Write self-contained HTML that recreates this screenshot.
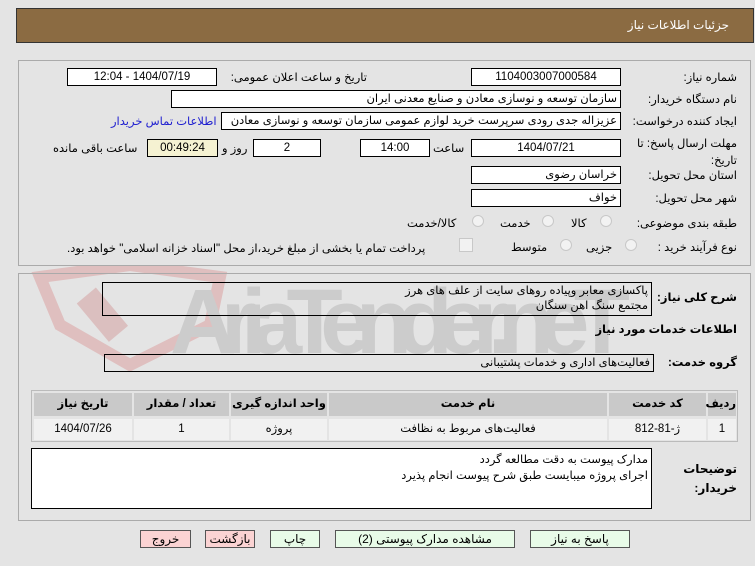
<!DOCTYPE html>
<html><head><meta charset="utf-8"><style>
body{margin:0;width:755px;height:566px;background:#e4e4e4;font-family:"Liberation Sans","DejaVu Sans",sans-serif;font-size:11.5px;color:#000;position:relative;overflow:hidden}
.a{position:absolute}
.box{position:absolute;background:#fff;border:1px solid #000;box-sizing:border-box;direction:rtl;padding:0 3px;line-height:16px;white-space:nowrap;overflow:hidden}
.c{text-align:center}
.l{position:absolute;direction:rtl;white-space:nowrap}
.panel{position:absolute;border:1px solid #aaa;box-sizing:border-box}
.rad{position:absolute;width:12px;height:12px;border-radius:50%;border:1px solid #c8c8c8;background:#f2f2f2;box-sizing:border-box}
.th,.td{position:absolute;box-sizing:border-box;text-align:center;line-height:22px;direction:rtl}
.th{background:#c9c9c9;font-weight:bold;top:393px;height:23px}
.td{background:#f1f1f1;top:419px;height:21px;line-height:20px}
.btn{position:absolute;top:530px;height:18px;border:1px solid #555;box-sizing:border-box;text-align:center;line-height:16px;font-size:12px}
</style></head><body>
<div class="a" style="left:16px;top:8px;width:738px;height:35px;background:#8b6b42;border:1px solid #333;box-sizing:border-box"></div>
<div class="l" style="right:26px;top:18px;color:#fff;font-size:12px">جزئیات اطلاعات نیاز</div>

<svg class="a" style="left:20px;top:265px;opacity:0.4" width="640" height="110">
<path d="M20 12 L110 0 L200 12 L190 60 L110 100 L40 60 Z" fill="none" stroke="#d88a8a" stroke-width="12"/>
<rect x="70" y="25" width="25" height="50" fill="#d08a8a" transform="rotate(-40 82 50)"/>
<text x="150" y="88" font-family="Liberation Sans" font-size="92" font-weight="bold" fill="#aaa" textLength="460">AriaTender.neT</text>
</svg>

<div class="panel" style="left:18px;top:60px;width:733px;height:206px"></div>
<div class="panel" style="left:18px;top:273px;width:733px;height:248px"></div>

<div class="l" style="right:18px;top:70px">شماره نیاز:</div>
<div class="box c" style="left:471px;top:68px;width:150px;height:18px">1104003007000584</div>
<div class="l" style="right:388px;top:70px">تاریخ و ساعت اعلان عمومی:</div>
<div class="box c" style="left:67px;top:68px;width:150px;height:18px">1404/07/19 - 12:04</div>

<div class="l" style="right:18px;top:92px">نام دستگاه خریدار:</div>
<div class="box" style="left:171px;top:90px;width:450px;height:18px">سازمان توسعه و نوسازی معادن و صنایع معدنی ایران</div>

<div class="l" style="right:18px;top:114px">ایجاد کننده درخواست:</div>
<div class="box" style="left:221px;top:112px;width:400px;height:18px">عزیزاله جدی رودی سرپرست خرید لوازم عمومی  سازمان توسعه و نوسازی معادن</div>
<div class="l" style="left:111px;top:114px;color:#2020d0">اطلاعات تماس خریدار</div>

<div class="l" style="right:18px;top:136px;line-height:17px;width:110px;white-space:normal">مهلت ارسال پاسخ: تا تاریخ:</div>
<div class="box c" style="left:471px;top:139px;width:150px;height:18px">1404/07/21</div>
<div class="l" style="left:433px;top:141px">ساعت</div>
<div class="box c" style="left:360px;top:139px;width:70px;height:18px">14:00</div>
<div class="box c" style="left:253px;top:139px;width:68px;height:18px">2</div>
<div class="l" style="left:222px;top:141px">روز و</div>
<div class="box c" style="left:147px;top:139px;width:71px;height:18px;background:#f5f2d2">00:49:24</div>
<div class="l" style="left:53px;top:141px">ساعت باقی مانده</div>

<div class="l" style="right:18px;top:168px">استان محل تحویل:</div>
<div class="box" style="left:471px;top:166px;width:150px;height:18px">خراسان رضوی</div>
<div class="l" style="right:18px;top:191px">شهر محل تحویل:</div>
<div class="box" style="left:471px;top:189px;width:150px;height:18px">خواف</div>

<div class="l" style="right:18px;top:216px">طبقه بندی موضوعی:</div>
<div class="rad" style="left:600px;top:215px"></div><div class="l" style="left:571px;top:216px">کالا</div>
<div class="rad" style="left:542px;top:215px"></div><div class="l" style="left:500px;top:216px">خدمت</div>
<div class="rad" style="left:472px;top:215px"></div><div class="l" style="left:407px;top:216px">کالا/خدمت</div>

<div class="l" style="right:18px;top:240px">نوع فرآیند خرید :</div>
<div class="rad" style="left:625px;top:239px"></div><div class="l" style="left:586px;top:240px">جزیی</div>
<div class="rad" style="left:560px;top:239px"></div><div class="l" style="left:511px;top:240px">متوسط</div>
<div class="a" style="left:459px;top:238px;width:12px;height:12px;border:1px solid #c8c8c8;background:#f2f2f2"></div>
<div class="l" style="left:67px;top:241px">پرداخت تمام یا بخشی از مبلغ خرید،از محل "اسناد خزانه اسلامی" خواهد بود.</div>

<div class="l" style="right:18px;top:290px;font-weight:bold;font-size:11.5px">شرح کلی نیاز:</div>
<div class="box" style="left:102px;top:282px;width:550px;height:34px;background:transparent;line-height:15px;padding-top:1px">پاکسازی معابر وپیاده روهای سایت از علف های هرز<br>مجتمع سنگ اهن سنگان</div>
<div class="l" style="right:18px;top:322px;font-weight:bold;font-size:11.5px">اطلاعات خدمات مورد نیاز</div>
<div class="l" style="right:18px;top:355px;font-weight:bold;font-size:11.5px">گروه خدمت:</div>
<div class="box" style="left:104px;top:354px;width:550px;height:18px;background:transparent">فعالیت‌های اداری و خدمات پشتیبانی</div>

<div class="a" style="left:31px;top:390px;width:707px;height:52px;border:1px solid #bbb;box-sizing:border-box;background:#e4e4e4"></div>
<div class="th" style="left:708px;width:28px">ردیف</div>
<div class="th" style="left:609px;width:97px">کد خدمت</div>
<div class="th" style="left:329px;width:278px">نام خدمت</div>
<div class="th" style="left:231px;width:96px">واحد اندازه گیری</div>
<div class="th" style="left:134px;width:95px">تعداد / مقدار</div>
<div class="th" style="left:34px;width:98px">تاریخ نیاز</div>
<div class="td" style="left:708px;width:28px">1</div>
<div class="td" style="left:609px;width:97px">ژ-81-812</div>
<div class="td" style="left:329px;width:278px">فعالیت‌های مربوط به نظافت</div>
<div class="td" style="left:231px;width:96px">پروژه</div>
<div class="td" style="left:134px;width:95px">1</div>
<div class="td" style="left:34px;width:98px">1404/07/26</div>

<div class="l" style="right:18px;top:460px;font-weight:bold;font-size:12px;line-height:19px;text-align:right">توضیحات<br>خریدار:</div>
<div class="box" style="left:31px;top:448px;width:621px;height:61px;line-height:16px;padding-top:3px">مدارک پیوست به دقت مطالعه گردد<br>اجرای پروژه میبایست طبق شرح پیوست انجام پذیرد</div>

<div class="btn" style="left:140px;width:51px;background:#fbd3d3">خروج</div>
<div class="btn" style="left:205px;width:50px;background:#fbd3d3">بازگشت</div>
<div class="btn" style="left:270px;width:50px;background:#e8fbe8">چاپ</div>
<div class="btn" style="left:335px;width:180px;background:#e8fbe8">مشاهده مدارک پیوستی (2)</div>
<div class="btn" style="left:530px;width:100px;background:#e8fbe8">پاسخ به نیاز</div>
</body></html>
